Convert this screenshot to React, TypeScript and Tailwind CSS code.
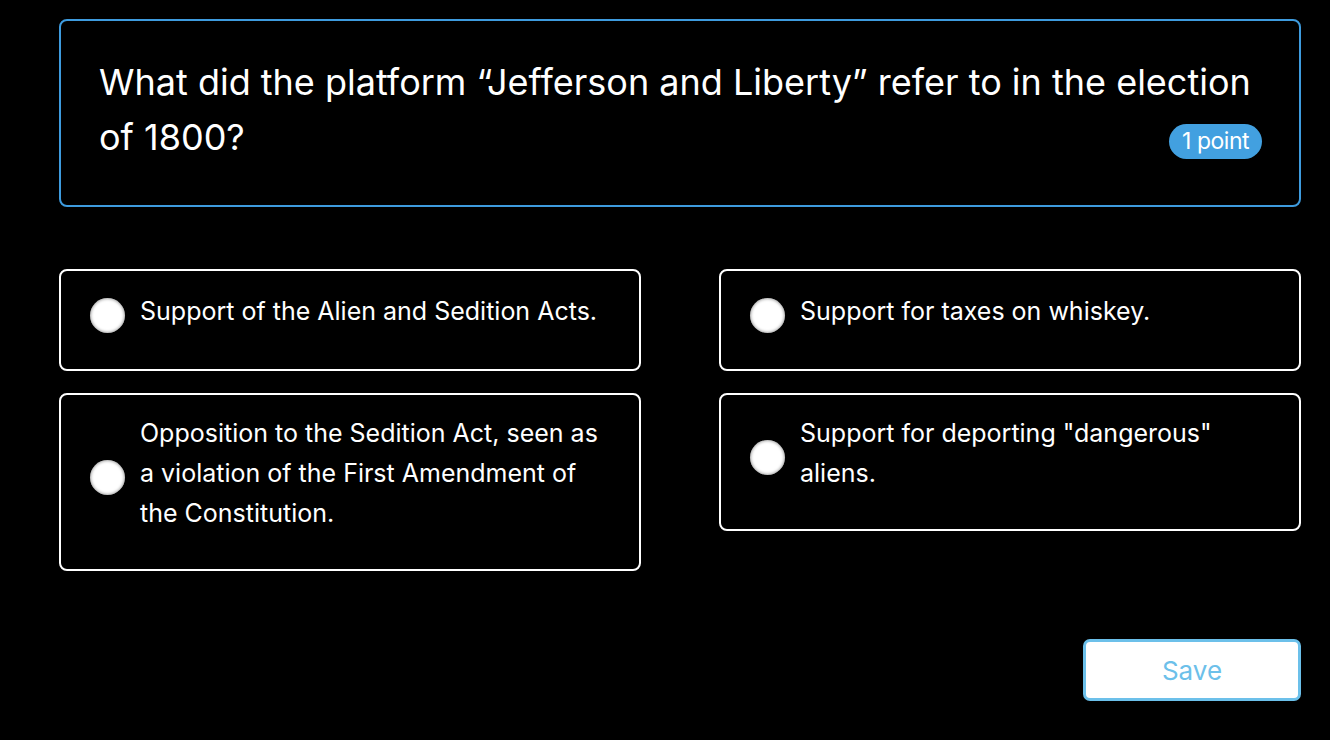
const options = [
  "Support of the Alien and Sedition Acts.",
  "Support for taxes on whiskey.",
  "Opposition to the Sedition Act, seen as a violation of the First Amendment of the Constitution.",
  'Support for deporting "dangerous" aliens.',
];

function Option({ text }: { text: string }) {
  return (
    <label className="flex items-center gap-[15px] min-h-[102px] rounded-[8px] border-2 border-white pl-[29px] pr-[24px] pt-[22px] pb-[32px] cursor-pointer">
      <span className="shrink-0 w-[35px] h-[35px] rounded-full bg-white shadow-[inset_0_0_3px_1px_rgba(0,0,0,0.35)]" />
      <span className="text-[25px] leading-[40px] text-white -mt-[4px] mb-[4px]">{text}</span>
    </label>
  );
}

export default function App() {
  return (
    <div className="bg-white min-h-[746px]" style={{ fontFamily: "Inter, 'Noto Sans', sans-serif" }}>
      <div className="h-[740px] bg-black pl-[59px] pr-[29px] pt-[19px]">
        {/* Question */}
        <div className="relative h-[188px] rounded-[8px] border-2 border-[#3e9bde] pl-[38px] pr-[30px] pt-[34px]">
          <h1 className="text-[36px] leading-[55px] text-white">
            What did the platform “Jefferson and Liberty” refer to in the election of 1800?
          </h1>
          <span className="absolute right-[37px] top-[103px] rounded-full bg-[#42a0e0] px-[13px] h-[35px] flex items-center text-[23px] text-white tracking-[-0.5px]">
            1 point
          </span>
        </div>

        {/* Options */}
        <div className="grid grid-cols-2 gap-x-[78px] gap-y-[22px] items-start mt-[62px]">
          {options.map((o) => (
            <Option key={o} text={o} />
          ))}
        </div>

        {/* Save */}
        <div className="flex justify-end mt-[68px]">
          <button className="w-[218px] h-[62px] rounded-[7px] border-[3px] border-[#6cc0ea] bg-white text-[26px] text-[#6cc0ea]">
            Save
          </button>
        </div>
      </div>
    </div>
  );
}
